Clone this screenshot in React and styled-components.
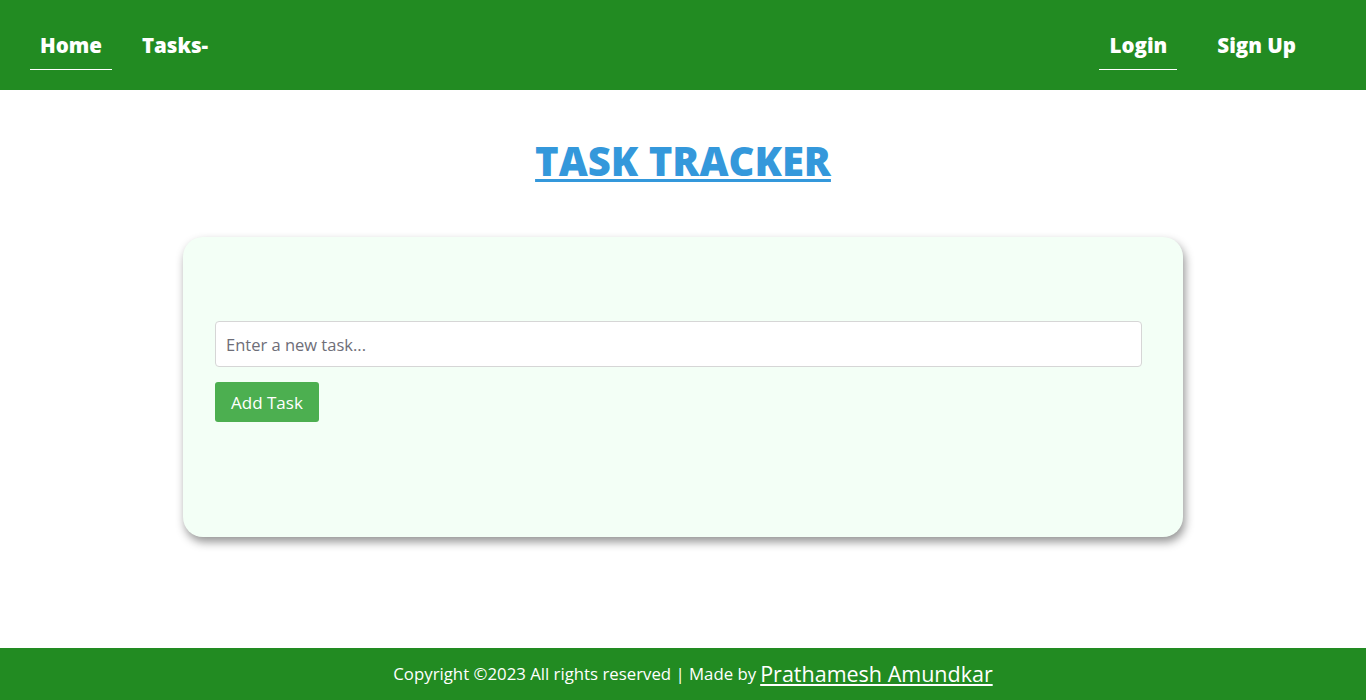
import React from "react";
import styled, { createGlobalStyle } from "styled-components";

const Global = createGlobalStyle`
  html, body { margin: 0; padding: 0; }
  body { font-family: "Open Sans", "Noto Sans", sans-serif; background: #fff; }
  * { box-sizing: border-box; }
`;

const Page = styled.div`
  min-height: 700px;
  display: flex;
  flex-direction: column;
`;

const Nav = styled.nav`
  height: 90px;
  background: #228b22;
  display: flex;
  align-items: flex-start;
  justify-content: space-between;
  padding: 0 60px 0 30px;
`;

const NavGroup = styled.div`
  display: flex;
  align-items: flex-start;
  gap: ${(p) => p.$gap}px;
`;

const NavLink = styled.a`
  display: flex;
  align-items: center;
  padding: 20px 10px 0;
  height: 70px;
  color: #fff;
  font-weight: 800;
  font-size: 20.5px;
  text-decoration: none;
  border-bottom: 1px solid ${(p) => (p.$active ? "#fff" : "transparent")};
`;

const Main = styled.main`
  flex: 1;
  display: flex;
  flex-direction: column;
  align-items: center;
`;

const Title = styled.h1`
  margin: 43px 0 48px;
  font-size: 40px;
  line-height: 56px;
  font-weight: 800;
  color: #3498db;
  text-decoration: underline;
  text-decoration-thickness: 3px;
  text-underline-offset: 3px;
`;

const Card = styled.section`
  width: 1000px;
  height: 300px;
  background: #f3fff6;
  border-radius: 20px;
  box-shadow: 2px 5px 10px rgba(0, 0, 0, 0.42);
  padding: 84px 41px 0 32px;
  display: flex;
  flex-direction: column;
  align-items: flex-start;
  gap: 15px;
`;

const Input = styled.input`
  width: 100%;
  height: 46px;
  border: 1px solid #d6d6d6;
  border-radius: 4px;
  background: #fff;
  padding: 0 10px;
  font-family: inherit;
  font-size: 16.5px;
  &::placeholder { color: #6e6e78; }
`;

const Button = styled.button`
  height: 40px;
  padding: 0 16px;
  background: #4caf50;
  color: #fff;
  border: none;
  border-radius: 3px;
  font-family: inherit;
  font-size: 17px;
`;

const Footer = styled.footer`
  height: 52px;
  background: #228b22;
  display: flex;
  align-items: center;
  justify-content: center;
  gap: 4px;
  color: #fff;
  font-size: 16.8px;
  padding: 0 0 2px 20px;
`;

const Author = styled.a`
  color: #fff;
  font-size: 21.5px;
  text-decoration: underline;
`;

export default function App() {
  return (
    <Page>
      <Global />
      <Nav>
        <NavGroup $gap={20}>
          <NavLink $active href="#">Home</NavLink>
          <NavLink href="#">Tasks-</NavLink>
        </NavGroup>
        <NavGroup $gap={30}>
          <NavLink $active href="#">Login</NavLink>
          <NavLink href="#">Sign Up</NavLink>
        </NavGroup>
      </Nav>
      <Main>
        <Title>TASK TRACKER</Title>
        <Card>
          <Input placeholder="Enter a new task..." />
          <Button>Add Task</Button>
        </Card>
      </Main>
      <Footer>
        <span>Copyright ©2023 All rights reserved | Made by</span>
        <Author href="#">Prathamesh Amundkar</Author>
      </Footer>
    </Page>
  );
}
